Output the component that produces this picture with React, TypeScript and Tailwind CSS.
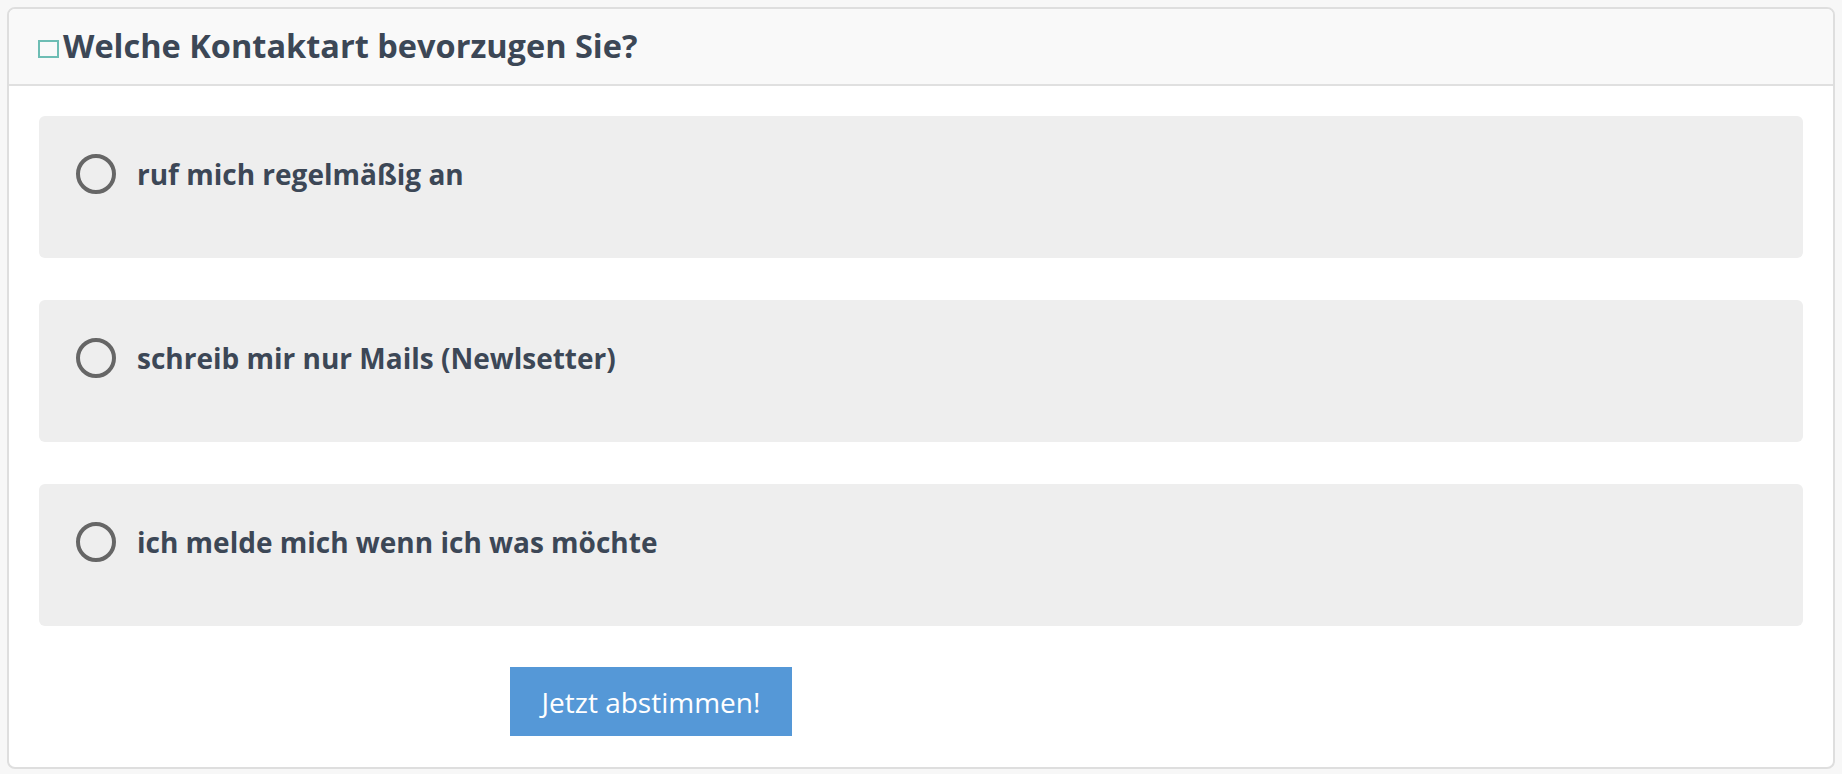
const options = [
  'ruf mich regelmäßig an',
  'schreib mir nur Mails (Newlsetter)',
  'ich melde mich wenn ich was möchte',
];

export default function App() {
  return (
    <div className="min-h-screen bg-[#f7f7f7] p-[7px] font-['Open_Sans',sans-serif]">
      <div className="rounded-[8px] border-2 border-[#dedede] bg-white overflow-hidden">
        {/* Header */}
        <div className="h-[77px] bg-[#f9f9f9] border-b-2 border-[#e0e0e0] flex items-center pl-[29px]">
          <span className="w-[21px] h-[18px] border-2 border-[#6dbdb4] mr-[4px] mt-[4px]" />
          <h2 className="text-[32.5px] font-bold text-[#3c4756]">
            Welche Kontaktart bevorzugen Sie?
          </h2>
        </div>

        {/* Options */}
        <div className="px-[30px] pt-[30px] pb-[31px]">
          <div className="flex flex-col gap-[42px]">
            {options.map((label) => (
              <label
                key={label}
                className="h-[142px] rounded-[6px] bg-[#eeeeee] flex items-start pt-[38px] pl-[37px] cursor-pointer"
              >
                <span className="w-[40px] h-[40px] rounded-full border-[4px] border-[#666666] flex-shrink-0" />
                <span className="ml-[21px] text-[28px] leading-[40px] font-bold text-[#3c4756]">
                  {label}
                </span>
              </label>
            ))}
          </div>

          <button className="mt-[41px] ml-[471px] w-[282px] h-[69px] bg-[#5598d7] text-white text-[28px]">
            Jetzt abstimmen!
          </button>
        </div>
      </div>
    </div>
  );
}
